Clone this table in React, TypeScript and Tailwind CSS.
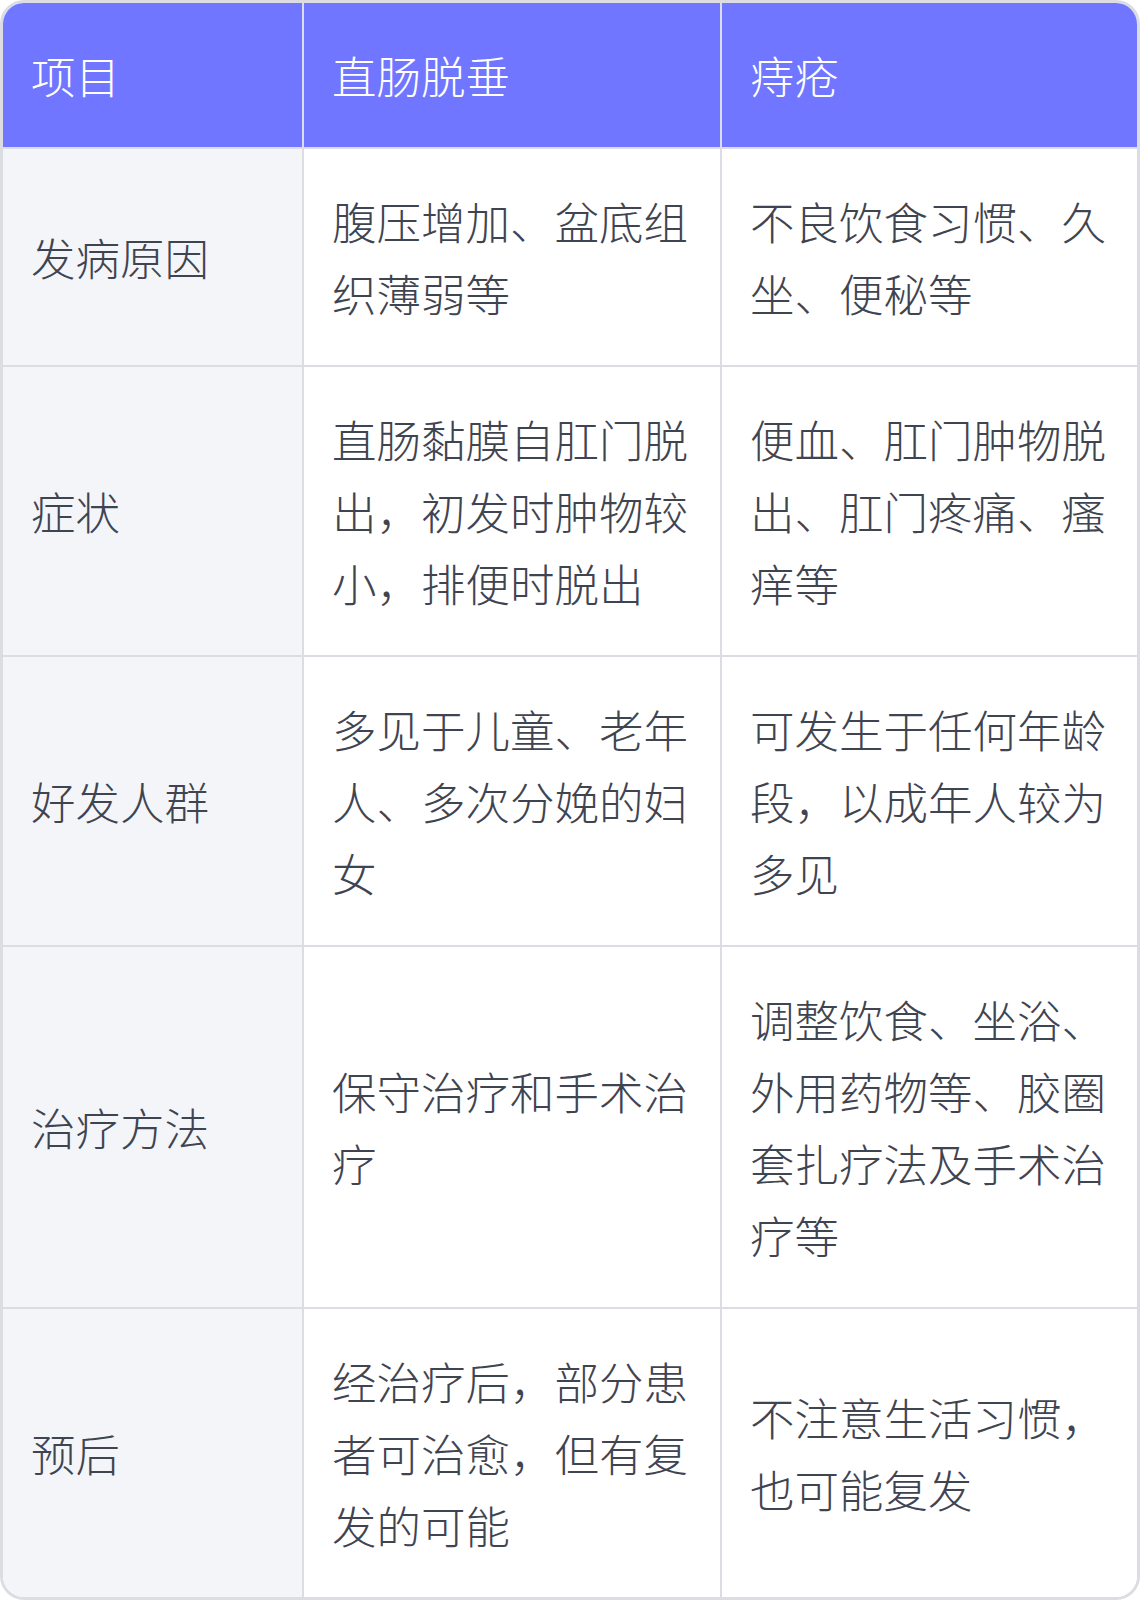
import React from 'react';

interface Row {
  item: string;
  prolapse: string;
  hemorrhoid: string;
}

const rows: Row[] = [
  { item: '发病原因', prolapse: '腹压增加、盆底组织薄弱等', hemorrhoid: '不良饮食习惯、久坐、便秘等' },
  { item: '症状', prolapse: '直肠黏膜自肛门脱出，初发时肿物较小，排便时脱出', hemorrhoid: '便血、肛门肿物脱出、肛门疼痛、瘙痒等' },
  { item: '好发人群', prolapse: '多见于儿童、老年人、多次分娩的妇女', hemorrhoid: '可发生于任何年龄段，以成年人较为多见' },
  { item: '治疗方法', prolapse: '保守治疗和手术治疗', hemorrhoid: '调整饮食、坐浴、外用药物等、胶圈套扎疗法及手术治疗等' },
  { item: '预后', prolapse: '经治疗后，部分患者可治愈，但有复发的可能', hemorrhoid: '不注意生活习惯，也可能复发' },
];

const App: React.FC = () => {
  return (
    <div
      className="w-[1140px] bg-white"
      style={{ fontFamily: '"Noto Sans CJK SC", "Noto Sans", sans-serif' }}
    >
      <div className="overflow-hidden rounded-[24px] border-[3px] border-[#dcdde3]">
        <table className="w-full table-fixed border-separate border-spacing-0 text-[44.5px] font-light leading-[72px]">
          <colgroup>
            <col className="w-[301px]" />
            <col className="w-[418px]" />
            <col />
          </colgroup>
          <thead>
            <tr className="bg-[#7076ff] text-white">
              <th className="border-b-2 border-r-2 border-[#dcdde3] px-[28px] py-[36px] text-left font-light">项目</th>
              <th className="border-b-2 border-r-2 border-[#dcdde3] px-[28px] py-[36px] text-left font-light">直肠脱垂</th>
              <th className="border-b-2 border-[#dcdde3] pl-[28px] pr-[26px] py-[36px] text-left font-light">痔疮</th>
            </tr>
          </thead>
          <tbody className="text-[#3f4451]">
            {rows.map((row, i) => {
              const last = i === rows.length - 1;
              const bottom = last ? '' : 'border-b-2';
              return (
                <tr key={row.item}>
                  <td className={`${bottom} border-r-2 border-[#dcdde3] bg-[#f4f5f9] px-[28px] py-[36px] align-middle`}>
                    {row.item}
                  </td>
                  <td className={`${bottom} border-r-2 border-[#dcdde3] bg-white px-[28px] py-[36px] align-middle`}>
                    {row.prolapse}
                  </td>
                  <td className={`${bottom} border-[#dcdde3] bg-white pl-[28px] pr-[26px] py-[36px] align-middle`}>
                    {row.hemorrhoid}
                  </td>
                </tr>
              );
            })}
          </tbody>
        </table>
      </div>
    </div>
  );
};

export default App;
